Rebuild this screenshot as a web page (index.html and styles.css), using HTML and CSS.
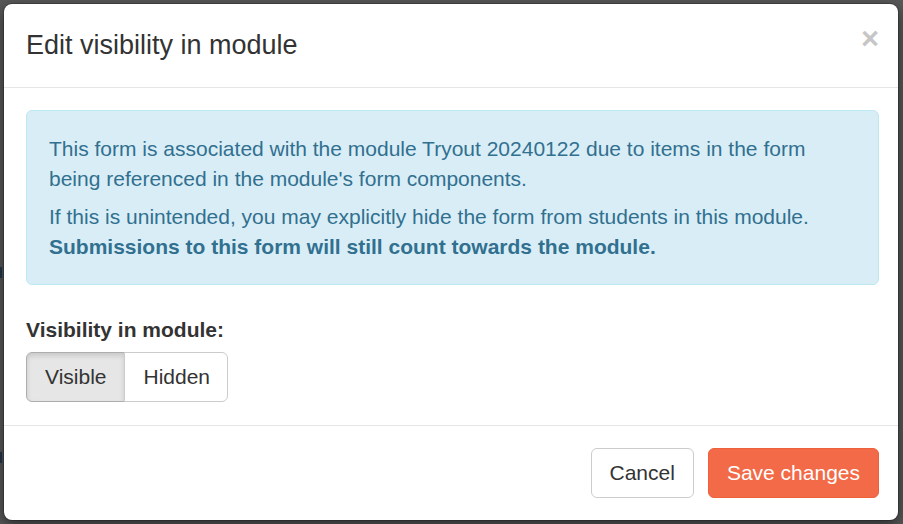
FILE: index.html
```html
<!DOCTYPE html>
<html>
<head>
<meta charset="utf-8">
<link rel="stylesheet" href="styles.css">
</head>
<body>
<div class="backdrop">
  <span class="peek peek-a"></span>
  <span class="peek peek-b"></span>
  <div class="modal">
    <div class="modal-header">
      <h4 class="modal-title">Edit visibility in module</h4>
      <button class="close" type="button">&times;</button>
    </div>
    <div class="modal-body">
      <div class="alert">
        <p>This form is associated with the module Tryout 20240122 due to items in the form being referenced in the module's form components.</p>
        <p>If this is unintended, you may explicitly hide the form from students in this module. <strong>Submissions to this form will still count towards the module.</strong></p>
      </div>
      <label class="field-label">Visibility in module:</label>
      <div class="btn-group">
        <button class="btn btn-default active" type="button">Visible</button>
        <button class="btn btn-default" type="button">Hidden</button>
      </div>
    </div>
    <div class="modal-footer">
      <button class="btn btn-default" type="button">Cancel</button>
      <button class="btn btn-primary" type="button">Save changes</button>
    </div>
  </div>
</div>
</body>
</html>
```
FILE: styles.css
```css
html, body {
  margin: 0;
  padding: 0;
  height: 100%;
}
body {
  background: #595959;
  font-family: "Liberation Sans", Arial, sans-serif;
  font-size: 21px;
  line-height: 30px;
  color: #333;
  overflow: hidden;
}
.backdrop {
  position: relative;
  padding: 3px 4px 3px 3px;
}
.peek {
  position: absolute;
  left: 0;
  width: 2px;
  height: 11px;
  background: #23374f;
}
.peek-a { top: 267px; }
.peek-b { top: 452px; }
.modal {
  position: relative;
  background: #fff;
  border: 1px solid rgba(0, 0, 0, 0.2);
  border-radius: 9px;
  box-shadow: 0 5px 15px rgba(0, 0, 0, 0.5);
  background-clip: padding-box;
}
.modal-header {
  display: flex;
  justify-content: space-between;
  align-items: flex-start;
  padding: 22px 19px 23px 22px;
  border-bottom: 1px solid #e5e5e5;
}
.modal-title {
  margin: 0;
  font-size: 27px;
  line-height: 38px;
  font-weight: normal;
  color: #333;
}
.close {
  border: 0;
  background: transparent;
  padding: 0;
  margin-top: -3px;
  font-family: "Liberation Sans", Arial, sans-serif;
  font-size: 31px;
  line-height: 31px;
  font-weight: bold;
  color: #000;
  opacity: 0.22;
  text-shadow: 0 1px 0 #fff;
  cursor: pointer;
}
.modal-body {
  padding: 22px 19px 23px 22px;
}
.alert {
  background: #d9edf7;
  border: 1px solid #bce8f1;
  color: #31708f;
  border-radius: 6px;
  padding: 23px 22px 22px;
  margin-bottom: 30px;
}
.alert p {
  margin: 0;
}
.alert p + p {
  margin-top: 8px;
}
.alert strong {
  font-weight: bold;
}
.field-label {
  display: block;
  font-weight: bold;
  margin-bottom: 7px;
}
.btn-group {
  display: flex;
}
.btn {
  font-family: "Liberation Sans", Arial, sans-serif;
  font-size: 21px;
  line-height: 30px;
  padding: 9px 18px;
  border: 1px solid transparent;
  border-radius: 6px;
  cursor: pointer;
}
.btn-group .btn + .btn {
  padding-right: 17px;
}
.btn-default {
  background: #fff;
  border-color: #ccc;
  color: #333;
}
.btn-default.active {
  background: #e6e6e6;
  border-color: #adadad;
  box-shadow: inset 0 3px 5px rgba(0, 0, 0, 0.125);
}
.btn-group .btn:first-child {
  border-top-right-radius: 0;
  border-bottom-right-radius: 0;
}
.btn-group .btn + .btn {
  margin-left: -1px;
  border-top-left-radius: 0;
  border-bottom-left-radius: 0;
}
.btn-primary {
  background: #f26a47;
  border-color: #ee5f3b;
  color: #fff;
}
.modal-footer {
  display: flex;
  justify-content: flex-end;
  gap: 14px;
  padding: 22px 19px 22px 22px;
  border-top: 1px solid #e5e5e5;
}
```
